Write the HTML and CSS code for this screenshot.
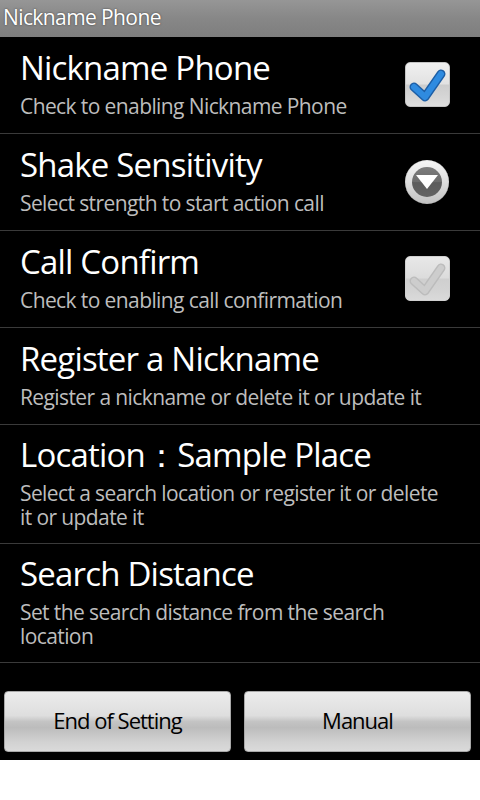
FILE: index.html
```html
<!DOCTYPE html>
<html lang="en">
<head>
    <meta charset="UTF-8">
    <meta name="viewport" content="width=device-width, initial-scale=1.0">
    <title>Nickname Phone</title>
    <link rel="stylesheet" href="styles.css">
</head>
<body>
    <div class="screen">
        <div class="titlebar">Nickname Phone</div>

        <ul class="prefs">
            <li class="pref">
                <div class="pref-text">
                    <div class="pref-title">Nickname Phone</div>
                    <div class="pref-summary">Check to enabling Nickname Phone</div>
                </div>
                <span class="checkbox">
                    <svg viewBox="0 0 45 45" width="45" height="45">
                        <path class="check-edge" d="M9 25 L20 35 L36 12"/>
                        <path class="check-fill" d="M9 25 L20 35 L36 12"/>
                    </svg>
                </span>
            </li>
            <li class="pref">
                <div class="pref-text">
                    <div class="pref-title">Shake Sensitivity</div>
                    <div class="pref-summary">Select strength to start action call</div>
                </div>
                <span class="dropdown">
                    <span class="dropdown-inner">
                        <svg viewBox="0 0 30 30" width="30" height="30">
                            <path d="M4 8 H26 L15 22 Z" fill="#fff"/>
                        </svg>
                    </span>
                </span>
            </li>
            <li class="pref">
                <div class="pref-text">
                    <div class="pref-title">Call Confirm</div>
                    <div class="pref-summary">Check to enabling call confirmation</div>
                </div>
                <span class="checkbox disabled">
                    <svg viewBox="0 0 45 45" width="45" height="45">
                        <path class="check-edge" d="M9 25 L20 35 L36 12"/>
                        <path class="check-fill" d="M9 25 L20 35 L36 12"/>
                    </svg>
                </span>
            </li>
            <li class="pref">
                <div class="pref-text">
                    <div class="pref-title">Register a Nickname</div>
                    <div class="pref-summary">Register a nickname or delete it or update it</div>
                </div>
            </li>
            <li class="pref">
                <div class="pref-text">
                    <div class="pref-title">Location：Sample Place</div>
                    <div class="pref-summary">Select a search location or register it or delete it or update it</div>
                </div>
            </li>
            <li class="pref">
                <div class="pref-text">
                    <div class="pref-title">Search Distance</div>
                    <div class="pref-summary">Set the search distance from the search location</div>
                </div>
            </li>
        </ul>

        <div class="buttons">
            <button class="btn">End of Setting</button>
            <button class="btn">Manual</button>
        </div>
    </div>
</body>
</html>
```
FILE: styles.css
```css
body {
    margin: 0;
    background: #fff;
    font-family: "Open Sans", "Noto Sans", sans-serif;
}
.screen {
    width: 480px;
    height: 760px;
    background: #000;
    overflow: hidden;
}
.titlebar {
    height: 37px;
    line-height: 34px;
    padding-left: 3px;
    background: linear-gradient(#969696, #878787 50%, #7e7e7e);
    color: #fff;
    font-size: 21px;
    letter-spacing: -0.6px;
    text-shadow: 0 0 2px rgba(0, 0, 0, 0.6);
}
.prefs {
    list-style: none;
    margin: 0;
    padding: 0;
}
.pref {
    display: flex;
    align-items: center;
    box-sizing: border-box;
    min-height: 97px;
    padding: 10px 30px 14px 20px;
    border-bottom: 1px solid #3a3a3a;
}
.pref-text {
    flex: 1;
}
.pref-title {
    color: #fff;
    font-size: 33px;
    line-height: 40px;
    letter-spacing: -0.8px;
}
.pref-summary {
    margin-top: 6px;
    color: #bdbdbd;
    font-size: 21px;
    line-height: 24px;
    letter-spacing: -0.6px;
}
.checkbox {
    width: 45px;
    height: 45px;
    box-sizing: border-box;
    border: 1px solid #c4c4c4;
    border-radius: 5px;
    background: linear-gradient(#f0f0f0, #e2e2e2 48%, #cdcdcd 52%, #d6d6d6 80%, #dedede);
    margin-top: 3px;
}
.checkbox svg {
    display: block;
    margin: -1px;
}
.check-edge {
    fill: none;
    stroke: #1c5ea6;
    stroke-width: 9;
    stroke-linecap: round;
    stroke-linejoin: round;
}
.check-fill {
    fill: none;
    stroke: #2f8be0;
    stroke-width: 6;
    stroke-linecap: round;
    stroke-linejoin: round;
}
.checkbox.disabled {
    border-color: #d0d0d0;
    background: linear-gradient(#e8e8e8, #dcdcdc 48%, #cfcfcf 52%, #d4d4d4 80%, #dadada);
}
.disabled .check-edge {
    stroke: #bcbcbc;
}
.disabled .check-fill {
    stroke: #cdcdcd;
}
.dropdown {
    display: flex;
    align-items: center;
    justify-content: center;
    width: 44px;
    height: 44px;
    border-radius: 50%;
    background: linear-gradient(#f6f6f6, #dedede 50%, #c2c2c2);
    box-shadow: inset 0 0 1px #999;
    margin: 3px 1px 0 0;
}
.dropdown-inner {
    display: block;
    width: 30px;
    height: 30px;
    border-radius: 50%;
    background: linear-gradient(#7c7c7c, #6c6c6c 50%, #5c5c5c 52%, #636363);
}
.dropdown-inner svg {
    display: block;
}
.buttons {
    display: flex;
    gap: 13px;
    padding: 28px 0 0 4px;
}
.btn {
    width: 227px;
    height: 61px;
    border: 1px solid #a8a8a8;
    border-radius: 4px;
    background: linear-gradient(#ececec, #dedede 40%, #c4c4c4 50%, #bcbcbc 60%, #d2d2d2 85%, #dadada);
    color: #000;
    font-family: "Open Sans", "Noto Sans", sans-serif;
    font-size: 22px;
    line-height: 52px;
    letter-spacing: -1px;
    padding: 0 0 4px;
}
```
